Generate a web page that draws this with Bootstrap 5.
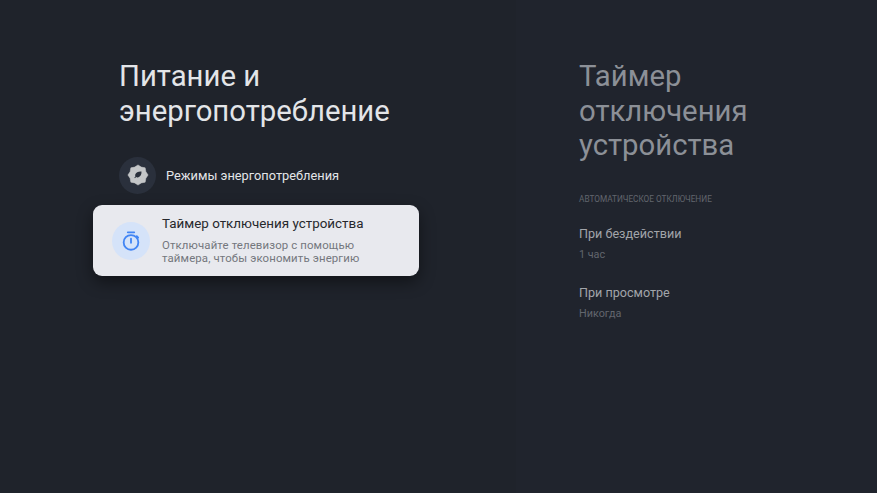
<!DOCTYPE html>
<html lang="ru">
<head>
<meta charset="utf-8">
<title>Питание и энергопотребление</title>
<link href="https://cdn.jsdelivr.net/npm/bootstrap@5.3.0/dist/css/bootstrap.min.css" rel="stylesheet">
<style>
html, body { height: 100%; }
body { background: #1f232b; font-family: Roboto, "Liberation Sans", sans-serif; overflow: hidden; }
.screen { width: 877px; height: 493px; }
.left-pane { width: 516px; padding: 59px 0 0 93px; }
.right-pane { width: 361px; padding: 59px 0 0 63px; background: #20242d; }
.main-title { font-size: 29.3px; line-height: 34.5px; font-weight: 400; color: #e3e5e8; margin: 0 0 0 26px; }
.side-title { font-size: 29.3px; line-height: 34.5px; font-weight: 400; color: #8c9097; margin: 0; }
.menu-row { width: 326px; height: 38px; margin-top: 28px; padding-left: 26px; gap: 10px; }
.ic-dark { width: 37px; height: 37px; background: #2a303c; }
.row-label { font-size: 12.8px; color: #e3e5e8; padding-top: 1px; }
.focus-card { width: 326px; height: 71px; margin-top: 11px; padding-left: 19px; gap: 12px; background: #e8e9ee; border-radius: 9px; box-shadow: 0 6px 16px rgba(0,0,0,.45); }
.ic-light { width: 38px; height: 38px; background: #d5e3f9; }
.card-title-text { font-size: 13.4px; line-height: 17px; color: #26282c; }
.card-sub { font-size: 11.4px; line-height: 13.5px; color: #74777d; margin-top: 7px; padding-bottom: 1px; letter-spacing: .13px; }
.section-cap { font-size: 8.25px; line-height: 11px; color: #62666d; margin-top: 31px; text-transform: uppercase; }
.opt-title { font-size: 12.6px; line-height: 17px; color: #a2a5aa; }
.opt-val { font-size: 10.8px; line-height: 14px; color: #62666d; margin-top: 6px; }
.opt-first { margin-top: 20px; }
.opt-next { margin-top: 22px; }
</style>
</head>
<body>
<div class="screen d-flex">
  <div class="left-pane">
    <h1 class="main-title">Питание и<br>энергопотребление</h1>
    <div class="menu-row d-flex align-items-center">
      <div class="ic-dark rounded-circle d-flex align-items-center justify-content-center flex-shrink-0">
        <svg width="22" height="22" viewBox="0 0 24 24">
          <path fill="#c4c6c8" stroke="#c4c6c8" stroke-width=".6" stroke-linejoin="round" d="M23 12l-2.400 3.600-.8 4.200-4.200.8L12 23l-3.600-2.400-4.200-.8-.8-4.200L1 12l2.400-3.600.8-4.200 4.200-.8L12 1l3.600 2.400 4.200.8.800 4.200z"/>
          <path fill="#2a303c" d="M15.800 8.200c.2 3-.9 5.600-3.800 6.400-.8.200-1.500 0-2.100-.3L8.700 15.500l-.7-.7 1.200-1.200c-.3-.6-.4-1.400-.2-2.100.8-2.700 3.500-3.500 6.800-3.300z"/>
        </svg>
      </div>
      <div class="row-label">Режимы энергопотребления</div>
    </div>
    <div class="focus-card d-flex align-items-center">
      <div class="ic-light rounded-circle d-flex align-items-center justify-content-center flex-shrink-0">
        <svg width="22" height="22" viewBox="0 0 24 24" fill="none" stroke="#4285f4" stroke-width="2">
          <circle cx="12" cy="13.5" r="8"/>
          <path d="M8.500 2.500h7M12 9.500v4.500M18.300 6.800l1.500 1.500" stroke-linecap="round"/>
        </svg>
      </div>
      <div>
        <div class="card-title-text">Таймер отключения устройства</div>
        <div class="card-sub">Отключайте телевизор с помощью<br>таймера, чтобы экономить энергию</div>
      </div>
    </div>
  </div>
  <div class="right-pane">
    <h2 class="side-title">Таймер<br>отключения<br>устройства</h2>
    <div class="section-cap">Автоматическое отключение</div>
    <div class="opt-first">
      <div class="opt-title">При бездействии</div>
      <div class="opt-val">1 час</div>
    </div>
    <div class="opt-next">
      <div class="opt-title">При просмотре</div>
      <div class="opt-val">Никогда</div>
    </div>
  </div>
</div>
<script src="https://cdn.jsdelivr.net/npm/bootstrap@5.3.0/dist/js/bootstrap.bundle.min.js"></script>
</body>
</html>
